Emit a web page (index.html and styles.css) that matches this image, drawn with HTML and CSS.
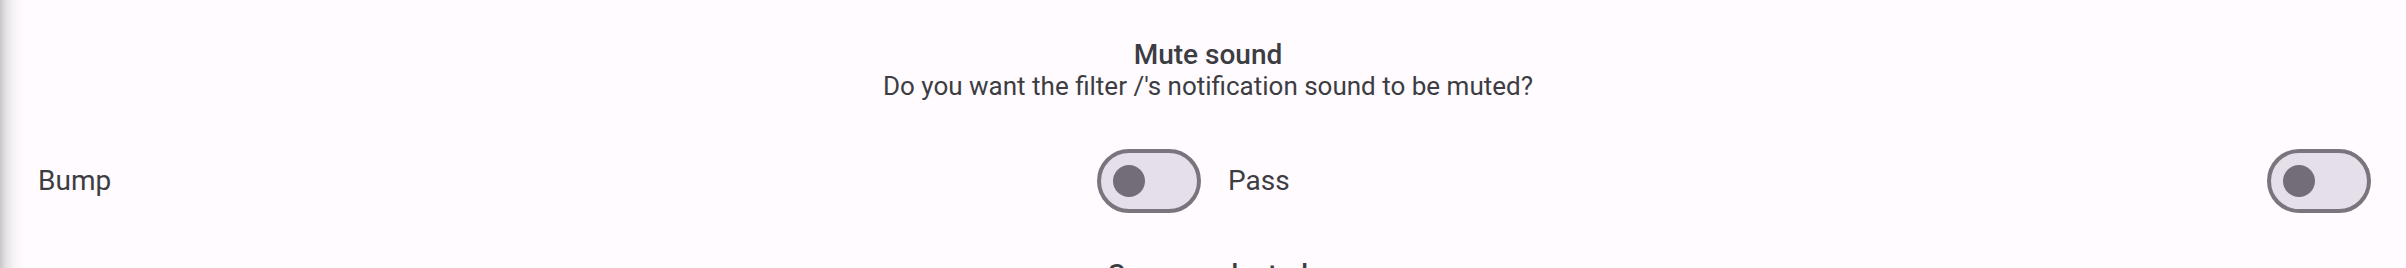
FILE: index.html
```html
<!DOCTYPE html>
<html lang="en">
<head>
<meta charset="utf-8">
<title>Filter settings</title>
<link rel="stylesheet" href="styles.css">
</head>
<body>
<main class="page">
  <section class="section">
    <header class="section-head">
      <h2 class="section-title">Mute sound</h2>
      <p class="section-desc">Do you want the filter /'s notification sound to be muted?</p>
    </header>
    <div class="options">
      <div class="option">
        <span class="option-label">Bump</span>
        <span class="switch" role="switch" aria-checked="false"><span class="thumb"></span></span>
      </div>
      <div class="option">
        <span class="option-label">Pass</span>
        <span class="switch" role="switch" aria-checked="false"><span class="thumb"></span></span>
      </div>
    </div>
  </section>
  <section class="section next">
    <header class="section-head">
      <h2 class="section-title">Screen selected</h2>
    </header>
  </section>
</main>
</body>
</html>
```
FILE: styles.css
```css
html, body {
  margin: 0;
  padding: 0;
  height: 100%;
  overflow: hidden;
}
body {
  background: linear-gradient(to right, rgba(0,0,0,0.21) 0, rgba(0,0,0,0.10) 6px, rgba(0,0,0,0.03) 14px, rgba(0,0,0,0) 24px), #FFFBFE;
  font-family: Roboto, "Noto Sans", sans-serif;
  color: #3c3d43;
}
.page {
  padding: 39px 35px 0 38px;
}
.section-head {
  text-align: center;
  padding-left: 7px;
}
.section-title {
  margin: 0;
  font-size: 28px;
  line-height: 32px;
  font-weight: 500;
}
.section-desc {
  margin: 0;
  font-size: 26px;
  line-height: 30px;
  font-weight: 400;
}
.options {
  margin-top: 48px;
  display: grid;
  grid-template-columns: 1163px 1fr;
  column-gap: 27px;
}
.option {
  display: flex;
  align-items: center;
  justify-content: space-between;
}
.option-label {
  font-size: 28px;
  line-height: 32px;
}
.switch {
  box-sizing: border-box;
  width: 104px;
  height: 64px;
  border: 4px solid #79747E;
  border-radius: 32px;
  background: #E4DFE8;
  display: flex;
  align-items: center;
  padding-left: 12px;
}
.thumb {
  width: 32px;
  height: 32px;
  border-radius: 50%;
  background: #736D79;
}
.next {
  margin-top: 46px;
}
```
